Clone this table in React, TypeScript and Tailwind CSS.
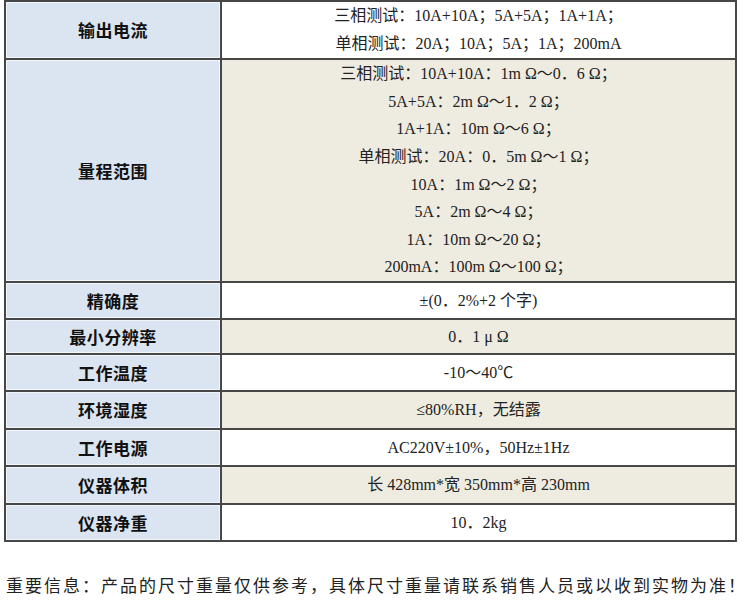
import React from "react";

type Row = { label: string; lines: string[]; h: number; tan?: boolean };

const rows: Row[] = [
  {
    label: "输出电流",
    lines: ["三相测试：10A+10A；5A+5A；1A+1A；", "单相测试：20A；10A；5A；1A；200mA"],
    h: 58,
  },
  {
    label: "量程范围",
    lines: [
      "三相测试：10A+10A：1m Ω～0．6 Ω；",
      "5A+5A：2m Ω～1．2 Ω；",
      "1A+1A：10m Ω～6 Ω；",
      "单相测试：20A：0．5m Ω～1 Ω；",
      "10A：1m Ω～2 Ω；",
      "5A：2m Ω～4 Ω；",
      "1A：10m Ω～20 Ω；",
      "200mA：100m Ω～100 Ω；",
    ],
    h: 223,
    tan: true,
  },
  { label: "精确度", lines: ["±(0．2%+2 个字)"], h: 37 },
  { label: "最小分辨率", lines: ["0．1 μ Ω"], h: 35, tan: true },
  { label: "工作温度", lines: ["-10～40℃"], h: 37 },
  { label: "环境湿度", lines: ["≤80%RH，无结露"], h: 38, tan: true },
  { label: "工作电源", lines: ["AC220V±10%，50Hz±1Hz"], h: 37 },
  { label: "仪器体积", lines: ["长 428mm*宽 350mm*高 230mm"], h: 38, tan: true },
  { label: "仪器净重", lines: ["10．2kg"], h: 37 },
];

export default function App() {
  return (
    <div className="w-[750px] h-[600px] bg-white overflow-hidden">
      <table className="ml-[4px] w-[733px] border-collapse border-2 border-[#474747] table-fixed">
        <tbody>
          {rows.map((r) => (
            <tr key={r.label} style={{ height: r.h }}>
              <td className="w-[216px] border-2 border-[#474747] bg-[#dbe5f1] text-center align-middle text-[17px] font-bold text-[#111] tracking-[0.5px] shadow-[inset_1px_1px_0_#f2f6fb,inset_-1px_-1px_0_#f2f6fb] [font-family:'Noto_Sans_CJK_SC',sans-serif]">
                {r.label}
              </td>
              <td
                className={
                  "border-2 border-[#474747] text-center align-middle text-[16px] text-[#222] [font-family:'Liberation_Serif','Noto_Sans_CJK_SC',serif] " +
                  (r.tan ? "bg-[#eeece1]" : "bg-white")
                }
              >
                {r.lines.map((l) => (
                  <div key={l} className="leading-[27.6px] whitespace-pre">
                    {l}
                  </div>
                ))}
              </td>
            </tr>
          ))}
        </tbody>
      </table>
      <p className="mt-[33px] ml-[6px] text-[17px] tracking-[2px] leading-[24px] text-[#222] whitespace-nowrap [font-family:'Liberation_Serif','Noto_Sans_CJK_SC',serif]">
        重要信息：产品的尺寸重量仅供参考，具体尺寸重量请联系销售人员或以收到实物为准！
      </p>
    </div>
  );
}
